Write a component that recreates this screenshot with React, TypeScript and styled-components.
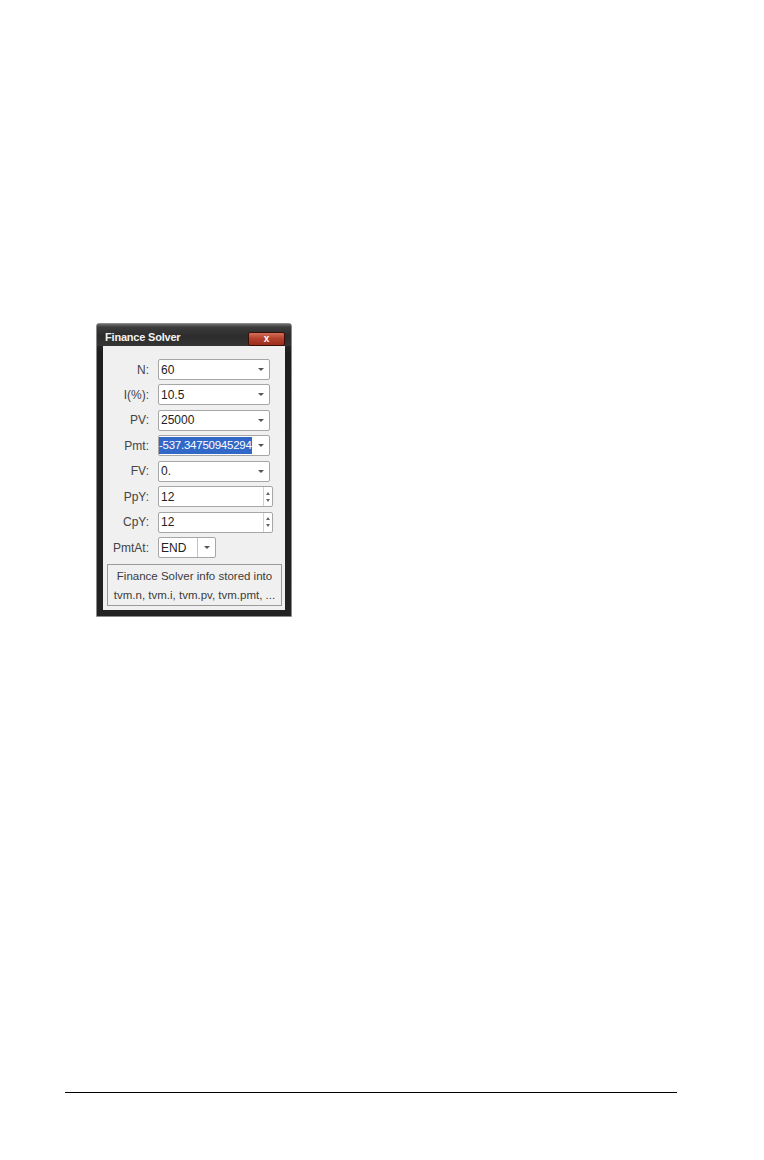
import styled, { createGlobalStyle } from 'styled-components';

const GlobalStyle = createGlobalStyle`
  html, body {
    margin: 0;
    padding: 0;
    background: #ffffff;
  }
  body {
    font-family: 'Liberation Sans', Arial, sans-serif;
  }
`;

const Page = styled.div`
  width: 764px;
  height: 1160px;
  display: flex;
  flex-direction: column;
  box-sizing: border-box;
  padding-top: 323px;
`;

const Window = styled.div`
  width: 196px;
  margin-left: 96px;
  box-sizing: border-box;
  padding: 0 6px 6px 6px;
  background: linear-gradient(#3a3a3a, #1e1e1e 30px, #222222);
  border: 1px solid #8a8a8a;
  border-radius: 3px 3px 0 0;
`;

const TitleBar = styled.div`
  height: 22px;
  display: flex;
  align-items: center;
  justify-content: space-between;
  margin: 0 -6px;
  padding: 0 6px 0 8px;
  background: linear-gradient(#6e6e6e 0px, #3c3c3c 3px, #2c2c2c 12px, #353535 22px);
`;

const Title = styled.span`
  color: #f2f2f2;
  font-size: 11px;
  font-weight: bold;
  letter-spacing: -0.2px;
  margin-top: 4px;
`;

const CloseButton = styled.div`
  width: 37px;
  height: 14px;
  margin-top: 7px;
  box-sizing: border-box;
  border: 1px solid #3a0e06;
  border-radius: 2px;
  background: linear-gradient(#d2705c, #b4412c 45%, #9c2e1c);
  color: #ffffff;
  font-size: 10px;
  font-weight: bold;
  display: flex;
  align-items: center;
  justify-content: center;
  line-height: 1;
`;

const Body = styled.div`
  background: #f0f0f0;
  padding: 13px 3px 4px 4px;
  display: flex;
  flex-direction: column;
`;

const Form = styled.div`
  display: grid;
  grid-template-columns: 42px auto;
  column-gap: 9px;
  row-gap: 4.45px;
  grid-auto-rows: 21px;
  align-items: center;
`;

const Label = styled.span`
  justify-self: end;
  font-size: 12px;
  color: #444444;
`;

const Field = styled.div<{ $width: number }>`
  width: ${(p) => p.$width}px;
  height: 21px;
  box-sizing: border-box;
  border: 1px solid #a6a6a6;
  border-radius: 2px;
  background: #ffffff;
  display: flex;
  align-items: center;
  overflow: hidden;
`;

const Value = styled.span`
  flex: 1;
  min-width: 0;
  padding-left: 2px;
  font-size: 12px;
  color: #222222;
  white-space: nowrap;
`;

const Selected = styled.span`
  display: inline-block;
  margin-left: -2px;
  padding: 2px 0;
  line-height: 13px;
  font-size: 11.5px;
  letter-spacing: -0.25px;
  background: #3168c8;
  color: #ffffff;
`;

const DropArrow = styled.div<{ $divider?: boolean }>`
  flex: none;
  width: ${(p) => (p.$divider ? 18 : 16)}px;
  height: 100%;
  box-sizing: border-box;
  border-left: ${(p) => (p.$divider ? '1px solid #c4c4c4' : 'none')};
  display: flex;
  align-items: center;
  justify-content: center;
  &::after {
    content: '';
    border-left: 3px solid transparent;
    border-right: 3px solid transparent;
    border-top: 3px solid #555555;
  }
`;

const Spinner = styled.div`
  flex: none;
  width: 9px;
  height: 100%;
  box-sizing: border-box;
  border-left: 1px solid #d0d0d0;
  display: flex;
  flex-direction: column;
  align-items: center;
  justify-content: center;
  gap: 4px;
`;

const SpinUp = styled.div`
  border-left: 2.5px solid transparent;
  border-right: 2.5px solid transparent;
  border-bottom: 3px solid #666666;
`;

const SpinDown = styled.div`
  border-left: 2.5px solid transparent;
  border-right: 2.5px solid transparent;
  border-top: 3px solid #666666;
`;

const InfoBox = styled.div`
  margin-top: 6px;
  height: 42px;
  box-sizing: border-box;
  border: 1px solid #9a9a9a;
  display: flex;
  flex-direction: column;
  align-items: center;
  justify-content: space-around;
  padding: 1px 0 0;
  font-size: 11.5px;
  color: #3c3c3c;
  white-space: nowrap;
`;

const FooterRule = styled.div`
  margin-top: auto;
  margin-bottom: 67px;
  margin-left: 65px;
  width: 612px;
  height: 1px;
  background: #000000;
`;

const dropFields = [
  { label: 'N:', value: '60' },
  { label: 'I(%):', value: '10.5' },
  { label: 'PV:', value: '25000' },
];

const spinFields = [
  { label: 'PpY:', value: '12' },
  { label: 'CpY:', value: '12' },
];

const App = () => {
  return (
    <>
      <GlobalStyle />
      <Page>
        <Window>
          <TitleBar>
            <Title>Finance Solver</Title>
            <CloseButton>x</CloseButton>
          </TitleBar>
          <Body>
            <Form>
              {dropFields.map((f) => (
                <>
                  <Label key={f.label + 'l'}>{f.label}</Label>
                  <Field key={f.label + 'f'} $width={112}>
                    <Value>{f.value}</Value>
                    <DropArrow />
                  </Field>
                </>
              ))}
              <Label>Pmt:</Label>
              <Field $width={112}>
                <Value>
                  <Selected>-537.34750945294</Selected>
                </Value>
                <DropArrow />
              </Field>
              <Label>FV:</Label>
              <Field $width={112}>
                <Value>0.</Value>
                <DropArrow />
              </Field>
              {spinFields.map((f) => (
                <>
                  <Label key={f.label + 'l'}>{f.label}</Label>
                  <Field key={f.label + 'f'} $width={115}>
                    <Value>{f.value}</Value>
                    <Spinner>
                      <SpinUp />
                      <SpinDown />
                    </Spinner>
                  </Field>
                </>
              ))}
              <Label>PmtAt:</Label>
              <Field $width={58}>
                <Value>END</Value>
                <DropArrow $divider />
              </Field>
            </Form>
            <InfoBox>
              <span>Finance Solver info stored into</span>
              <span>tvm.n, tvm.i, tvm.pv, tvm.pmt, ...</span>
            </InfoBox>
          </Body>
        </Window>
        <FooterRule />
      </Page>
    </>
  );
};

export default App;
